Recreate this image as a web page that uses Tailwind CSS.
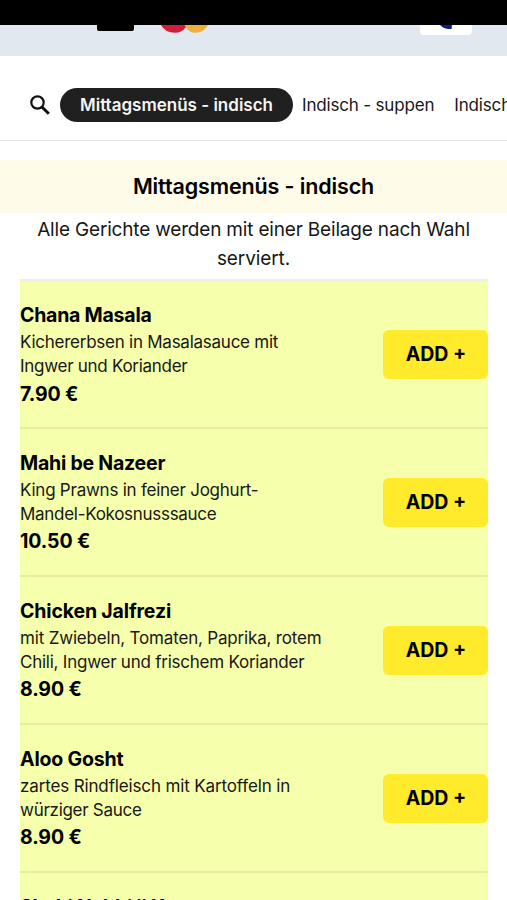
<!DOCTYPE html>
<html lang="de"><head><meta charset="utf-8"><title>Mittagsmenüs</title>
<script src="https://cdn.jsdelivr.net/npm/@tailwindcss/browser@4"></script></head>
<body class="h-[900px] w-[507px] overflow-hidden bg-white font-['Inter',sans-serif] text-[#171717]">
<div class="h-[25px] bg-black"></div>
<div class="flex h-[31px] items-start bg-[#e2e8f0]">
  <div class="ml-[97px] h-[6px] w-[37px] rounded-b-[2px] bg-black"></div>
  <svg class="ml-[27px] h-[8px] w-[50px]" viewBox="0 0 50 8"><path d="M0 0Q4 7.8 14 7.8Q21 7.8 25 2L24 0Z" fill="#cf2038"/><path d="M24 0L25 2Q28 7.8 34 7.8Q43 7.8 47 0Z" fill="#edae3c"/></svg>
  <div class="ml-auto mr-[35px] flex h-[10px] w-[52px] justify-center rounded-b-[4px] bg-white"><svg class="h-[4px] w-[12px]" viewBox="0 0 12 4"><path d="M0 0H12L11.5 4H8Q3 3.5 0 0Z" fill="#0b1f80"/></svg></div>
</div>
<nav class="flex h-[85px] items-center border-b border-[#e5e5e5] pt-[13px] pl-[30px]">
  <svg class="h-[20px] w-[20px] shrink-0" viewBox="0 0 20 20" fill="none" stroke="#111" stroke-width="2.2"><circle cx="7.5" cy="7.5" r="6.2"/><path d="M12 12L18.8 18.8" stroke-width="3"/></svg>
  <div class="ml-[10px] flex h-[34px] w-[233px] shrink-0 items-center justify-center rounded-full bg-[#202020] pt-[2px] text-[17px] font-semibold whitespace-nowrap text-[#f5f5f5]"><span>Mittagsmenüs - indisch</span></div>
  <span class="ml-[9px] shrink-0 pt-[2px] text-[17px] tracking-[-0.17px] whitespace-nowrap">Indisch - suppen</span>
  <span class="ml-[20px] shrink-0 pt-[2px] text-[17px] tracking-[-0.17px] whitespace-nowrap">Indisch</span>
</nav>
<h1 class="mt-[19px] flex h-[53px] items-center justify-center bg-[#fefce8] text-[21.5px] font-semibold tracking-[-0.13px] text-black"><span>Mittagsmenüs - indisch</span></h1>
<p class="h-[66px] pt-[2px] text-center text-[19px] leading-[29px]"><span class="tracking-[-0.18px]">Alle Gerichte werden mit einer Beilage nach Wahl</span><br><span class="tracking-[-0.1px]">serviert.</span></p>
<main class="mx-[20px] w-[468px] border-t-[3px] border-[#eeeeec] bg-[#f6ffab]">
  <section class="flex h-[147px] items-center justify-between border-b-2 border-[#e6ee9f]">
    <div><h2 class="text-[19.5px] leading-[29px] font-bold text-black"><span class="tracking-[-0.23px]">Chana Masala</span></h2><p class="mb-[2px] text-[17px] leading-[24px]"><span class="tracking-[-0.25px]">Kichererbsen in Masalasauce mit</span><br><span class="tracking-[-0.28px]">Ingwer und Koriander</span></p><p class="text-[19.5px] leading-[29px] font-bold text-black"><span class="tracking-[-0.1px]">7.90 €</span></p></div>
    <button class="h-[49px] w-[105px] rounded-[6px] bg-[#ffea2c] pt-px pl-px text-[19.5px] font-bold text-black"><span>ADD +</span></button>
  </section>
  <section class="flex h-[148px] items-center justify-between border-b-2 border-[#e6ee9f]">
    <div class="pt-px"><h2 class="text-[19.5px] leading-[29px] font-bold text-black"><span class="tracking-[-0.22px]">Mahi be Nazeer</span></h2><p class="mb-px text-[17px] leading-[24px]"><span class="tracking-[-0.24px]">King Prawns in feiner Joghurt-</span><br><span class="tracking-[-0.29px]">Mandel-Kokosnusssauce</span></p><p class="text-[19.5px] leading-[29px] font-bold text-black"><span class="tracking-[-0.1px]">10.50 €</span></p></div>
    <button class="h-[49px] w-[105px] rounded-[6px] bg-[#ffea2c] pt-px pl-px text-[19.5px] font-bold text-black"><span>ADD +</span></button>
  </section>
  <section class="flex h-[148px] items-center justify-between border-b-2 border-[#e6ee9f]">
    <div class="pt-px"><h2 class="text-[19.5px] leading-[29px] font-bold text-black"><span class="tracking-[-0.15px]">Chicken Jalfrezi</span></h2><p class="mb-px text-[17px] leading-[24px]"><span class="tracking-[-0.18px]">mit Zwiebeln, Tomaten, Paprika, rotem</span><br><span class="tracking-[-0.24px]">Chili, Ingwer und frischem Koriander</span></p><p class="text-[19.5px] leading-[29px] font-bold text-black"><span class="tracking-[-0.1px]">8.90 €</span></p></div>
    <button class="h-[49px] w-[105px] rounded-[6px] bg-[#ffea2c] pt-px pl-px text-[19.5px] font-bold text-black"><span>ADD +</span></button>
  </section>
  <section class="flex h-[148px] items-center justify-between border-b-2 border-[#e6ee9f]">
    <div class="pt-px"><h2 class="text-[19.5px] leading-[29px] font-bold text-black"><span class="tracking-[-0.18px]">Aloo Gosht</span></h2><p class="mb-px text-[17px] leading-[24px]"><span class="tracking-[-0.14px]">zartes Rindfleisch mit Kartoffeln in</span><br><span class="tracking-[-0.28px]">würziger Sauce</span></p><p class="text-[19.5px] leading-[29px] font-bold text-black"><span class="tracking-[-0.1px]">8.90 €</span></p></div>
    <button class="h-[49px] w-[105px] rounded-[6px] bg-[#ffea2c] pt-px pl-px text-[19.5px] font-bold text-black"><span>ADD +</span></button>
  </section>
  <section class="h-[148px] pt-[20px]"><h2 class="text-[19.5px] leading-[29px] font-bold text-black"><span class="tracking-[-0.2px]">Shahi Nabhi ji K</span></h2></section>
</main>
</body></html>
